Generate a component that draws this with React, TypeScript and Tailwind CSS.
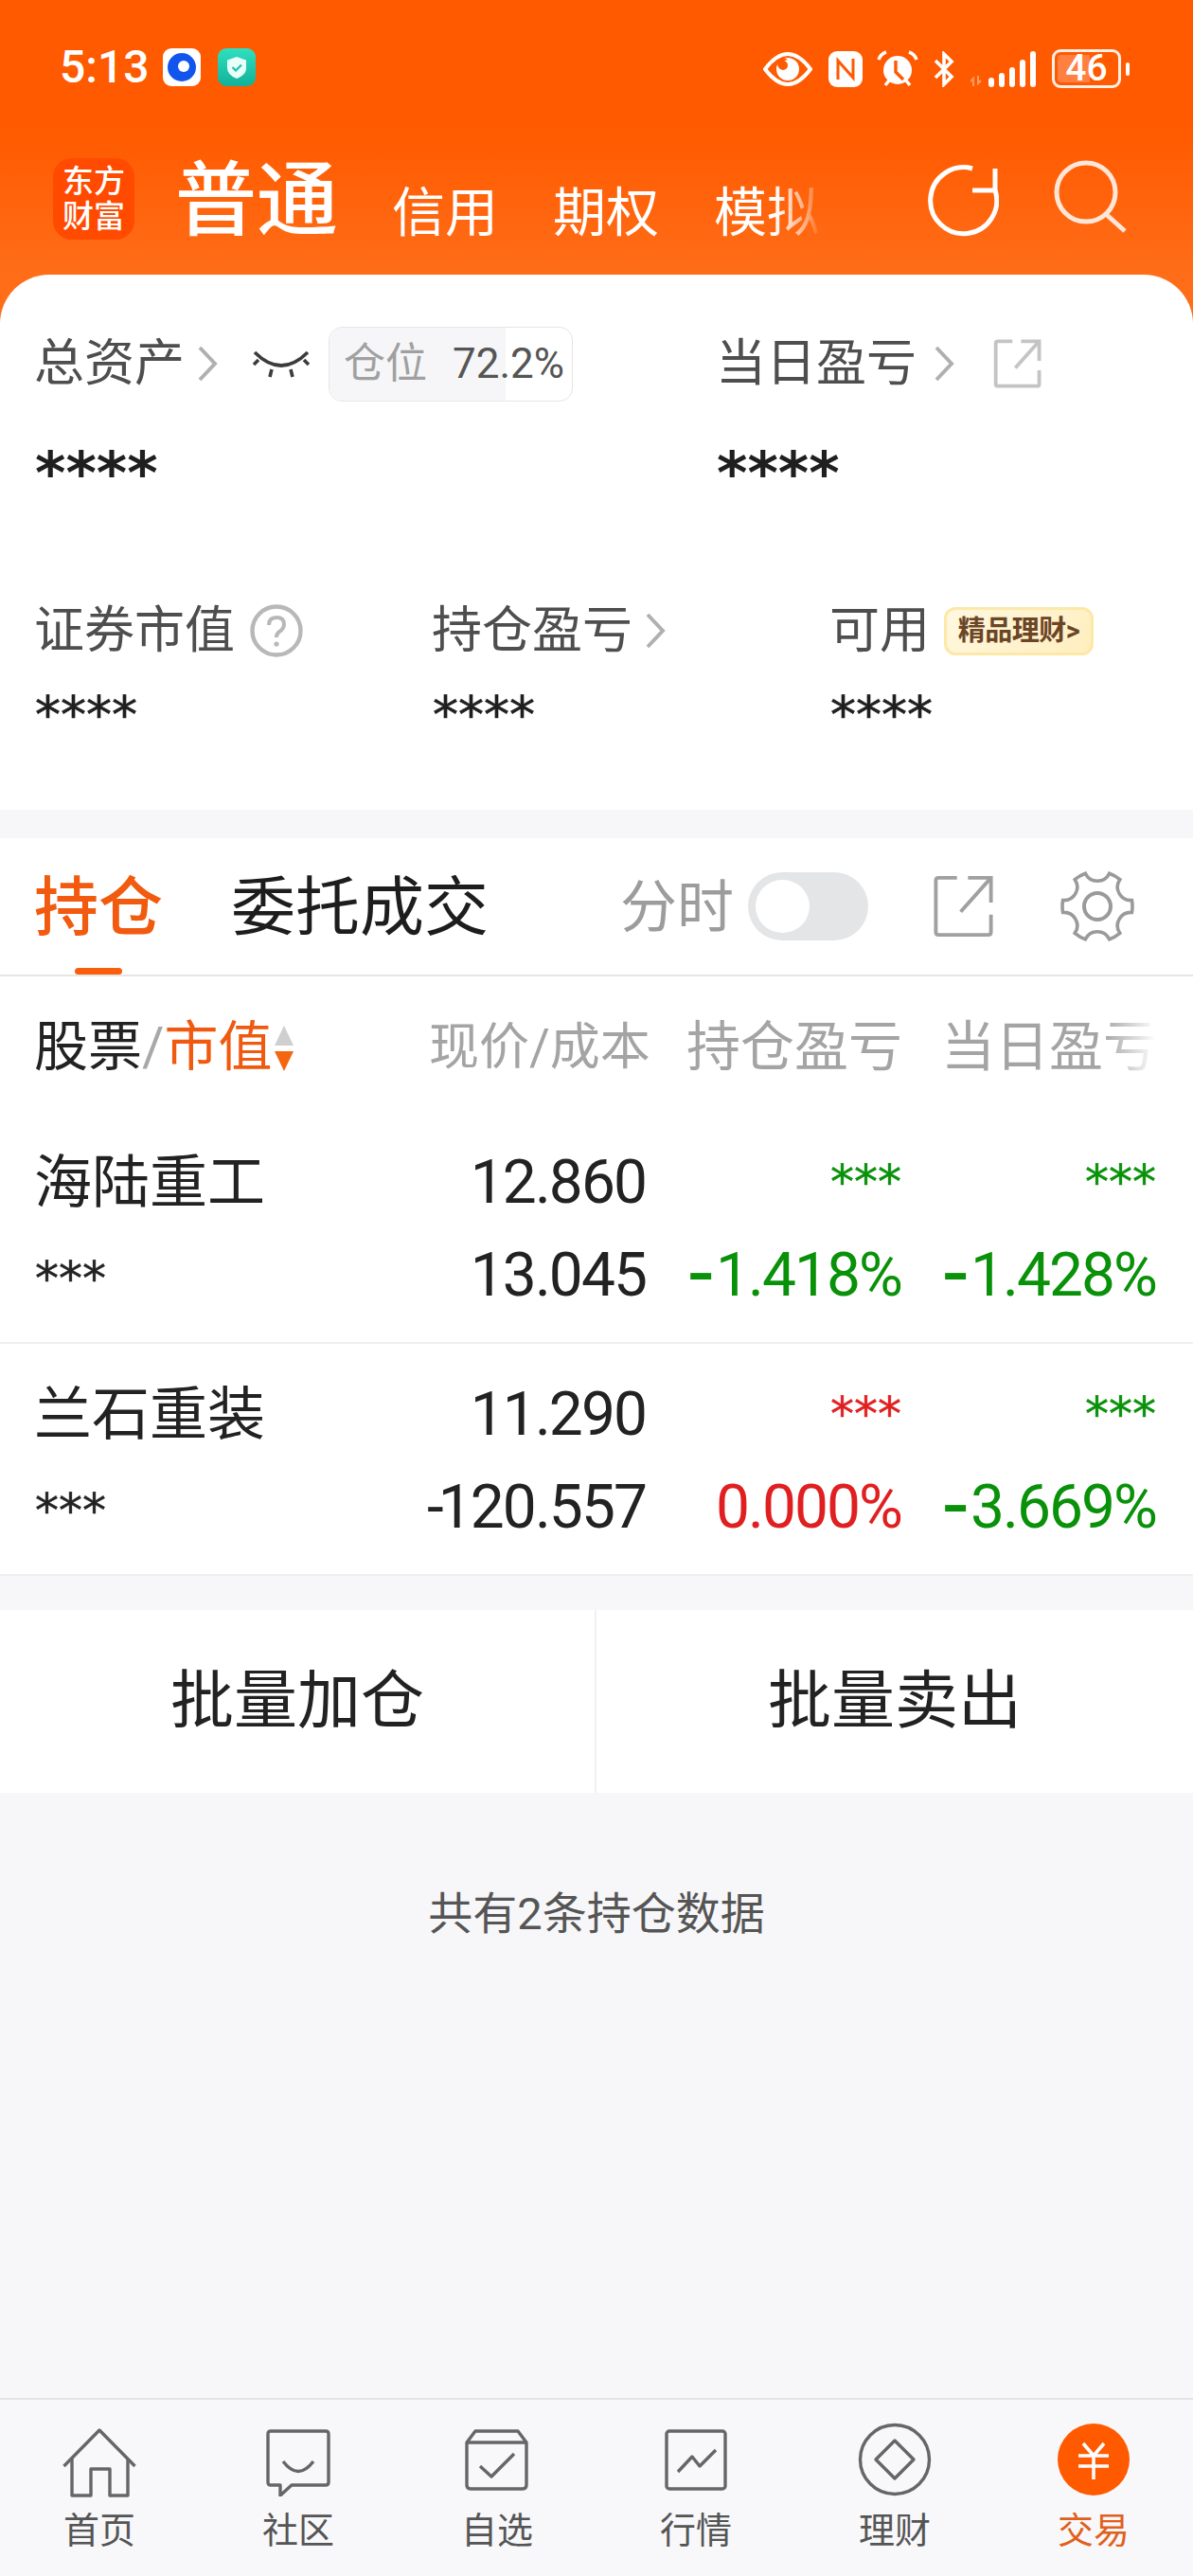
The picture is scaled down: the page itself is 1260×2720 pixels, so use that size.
import React from "react";

const stars = "[font-family:'DejaVu_Sans',sans-serif]";

function Chevron({ className = "" }: { className?: string }) {
  return (
    <svg width="24" height="38" viewBox="0 0 24 38" fill="none" className={className}>
      <path d="M4 2 L20 19 L4 36" stroke="#b0b0b0" strokeWidth="4" />
    </svg>
  );
}

function ShareIcon({ size, color, sw }: { size: number; color: string; sw: number }) {
  return (
    <svg width={size} height={size} viewBox="0 0 65 68" fill="none">
      <path d="M25 3 H5 Q2 3 2 6 V62 Q2 65 5 65 H59 Q62 65 62 62 V43" stroke={color} strokeWidth={sw} />
      <path d="M37 3 H62 V30" stroke={color} strokeWidth={sw} />
      <path d="M62 3 L29 40" stroke={color} strokeWidth={sw} />
    </svg>
  );
}

function gearPath() {
  const c = 39, R = 37;
  const pt = (deg: number) => {
    const t = (deg * Math.PI) / 180;
    return `${(c + R * Math.cos(t)).toFixed(2)} ${(c + R * Math.sin(t)).toFixed(2)}`;
  };
  let d = `M${pt(-110)}`;
  for (let k = 0; k < 6; k++) {
    const a = -90 + 60 * k;
    d += ` A14 14 0 0 0 ${pt(a + 20)}`;
    d += ` A37 37 0 0 1 ${pt(a + 40)}`;
  }
  return d + " Z";
}

function NavIcon({ name }: { name: string }) {
  const s = { fill: "none", stroke: "#666", strokeWidth: 3.4, strokeLinejoin: "round" as const };
  if (name === "首页")
    return (
      <svg width="78" height="74" viewBox="0 0 78 74" {...s} className="mt-[2px]">
        <path d="M1.5 40 L39 2 L76.5 40" />
        <path d="M10 32 V71 H30 V43 H50 V71 H69 V32" />
      </svg>
    );
  if (name === "社区")
    return (
      <svg width="78" height="74" viewBox="-5 -3 78 74" {...s}>
        <path d="M5 2 H63 Q66 2 66 5 V56 Q66 59 63 59 H27 L15 70 V59 H5 Q2 59 2 56 V5 Q2 2 5 2 Z" />
        <path d="M18 34 Q34 55 50 34" />
      </svg>
    );
  if (name === "自选")
    return (
      <svg width="78" height="74" viewBox="-5 -3 78 74" {...s}>
        <path d="M2 14 L11 2 H56 L65 14 V59 Q65 63 61 63 H6 Q2 63 2 59 Z" />
        <path d="M2 14 H65" />
        <path d="M16 39 L28 50 L52 26" />
      </svg>
    );
  if (name === "行情")
    return (
      <svg width="78" height="74" viewBox="-6 -3 78 74" {...s}>
        <rect x="2" y="2" width="62" height="61" rx="3" />
        <path d="M14 45 L29 29 L37 39 L54 22" />
      </svg>
    );
  if (name === "理财")
    return (
      <svg width="78" height="78" viewBox="0 0 78 78" {...s} className="-mt-[4px]">
        <circle cx="39" cy="39" r="36.5" />
        <path d="M39 19 L59 39 L39 59 L19 39 Z" />
      </svg>
    );
  return (
    <svg width="78" height="78" viewBox="0 0 78 78" fill="none" className="-mt-[4px]">
      <circle cx="39" cy="39" r="38" fill="#ff5a00" />
      <path d="M28 22 L39 35 L50 22 M23 35 H55 M23 46 H55 M39 35 V60" stroke="#fff" strokeWidth="3.6" />
    </svg>
  );
}

function StatusIcons() {
  return (
    <div className="flex items-center mr-[67px] mt-[2px]">
      {/* eye */}
      <svg width="52" height="36" viewBox="0 0 52 36" className="mr-[17px]">
        <path d="M2 18 Q14 2 26 2 Q38 2 50 18 Q38 34 26 34 Q14 34 2 18 Z" fill="none" stroke="#fff" strokeWidth="4" />
        <circle cx="26" cy="18" r="12" fill="#fff" />
        <path d="M26 8 A10 10 0 0 0 17 17 A6 6 0 0 1 26 8 Z" fill="#ff5a00" />
        <circle cx="21" cy="14" r="5" fill="#ff5a00" />
      </svg>
      {/* nfc */}
      <svg width="36" height="38" viewBox="0 0 36 38" className="mr-[15px]">
        <rect x="0" y="0" width="36" height="38" rx="9" fill="#fff" />
        <path d="M10 30 V10 L26 28 V8" fill="none" stroke="#ff5a00" strokeWidth="3" />
        <path d="M16 4 H8 Q5 4 5 8 V30 M20 34 H28 Q31 34 31 30 V8" fill="none" stroke="#fff" strokeWidth="1" />
      </svg>
      {/* alarm */}
      <svg width="44" height="40" viewBox="0 0 44 40" className="mr-[16px]">
        <path d="M2 10 Q4 4 10 2 M42 10 Q40 4 34 2 M9 37 L13 32 M35 37 L31 32" stroke="#fff" strokeWidth="3.5" fill="none" />
        <circle cx="22" cy="21" r="15" fill="#fff" />
        <path d="M20 11 V23 L28 31" stroke="#ff5a00" strokeWidth="3.4" fill="none" />
      </svg>
      {/* bluetooth */}
      <svg width="22" height="38" viewBox="0 0 22 38" className="mr-[17px]">
        <path d="M2 10 L19 27 L11 35 V3 L19 11 L2 28" fill="none" stroke="#fff" strokeWidth="3.6" />
      </svg>
      {/* signal */}
      <svg width="72" height="40" viewBox="0 0 72 40" className="mr-[14px]">
        <path d="M3 38 V30 L0 33 M8 27 V35 L11 32" stroke="#ff9c66" strokeWidth="2" fill="none" />
        <rect x="19" y="29" width="6" height="10" rx="3" fill="#fff" />
        <rect x="30" y="24" width="6" height="15" rx="3" fill="#fff" />
        <rect x="41" y="18" width="6" height="21" rx="3" fill="#fff" />
        <rect x="52" y="10" width="6" height="29" rx="3" fill="#fff" />
        <rect x="63" y="1" width="6" height="38" rx="3" fill="#fff" />
      </svg>
      {/* battery */}
      <div className="flex items-center gap-[5px]">
        <div className="relative w-[73px] h-[41px] rounded-[9px] border-[3px] border-white/90 p-[3px] flex">
          <div className="w-[34px] bg-[#ff8040] rounded-l-[4px]" />
          <span className="absolute inset-0 flex items-center justify-center text-white text-[39px] leading-none font-medium">46</span>
        </div>
        <div className="w-[4px] h-[14px] rounded-full bg-white" />
      </div>
    </div>
  );
}

function Header() {
  return (
    <div className="h-[340px] bg-[linear-gradient(180deg,#ff5a00_0%,#ff5a00_40%,#ff6d18_85%,#ff6d18_100%)] text-white shrink-0">
      <div className="h-[142px] flex items-start justify-between pt-[50px]">
        <div className="flex items-center pl-[63px] h-[42px]">
          <span className="text-[48px] leading-none font-medium w-[109px]">5:13</span>
          <div className="w-[40px] h-[40px] rounded-[9px] bg-white flex items-center justify-center">
            <div className="w-[30px] h-[30px] rounded-full bg-[#1155ee] flex items-center justify-center">
              <div className="w-[12px] h-[12px] rounded-full bg-white -mt-[3px] ml-[3px]" />
            </div>
          </div>
          <div className="ml-[18px] w-[40px] h-[40px] rounded-[9px] bg-[linear-gradient(180deg,#2fe0c0,#12b098)] flex items-center justify-center">
            <svg width="22" height="25" viewBox="0 0 22 25">
              <path d="M11 1 L21 4.5 V13 Q21 20 11 24 Q1 20 1 13 V4.5 Z" fill="#e8fffa" />
              <path d="M6.5 12 L10 15.5 L16 9.5" stroke="#20c0a8" strokeWidth="2.2" fill="none" />
            </svg>
          </div>
        </div>
        <StatusIcons />
      </div>
      <div className="flex items-end h-[126px] pb-[8px] relative">
        <div className="ml-[56px] w-[86px] h-[86px] shrink-0 rounded-[20px] bg-[#ff4a00] flex flex-col items-center justify-center mb-[7px]">
          <span className="text-[33px] leading-[37px] font-medium whitespace-nowrap">东方</span>
          <span className="text-[33px] leading-[37px] font-medium whitespace-nowrap">财富</span>
        </div>
        <span className="ml-[43px] shrink-0 text-[86px] leading-[96px] font-medium w-[229px] mb-[-1px]">普通</span>
        <span className="shrink-0 text-[56px] leading-[64px] w-[170px] mb-[3px]">信用</span>
        <span className="shrink-0 text-[56px] leading-[64px] w-[170px] mb-[3px]">期权</span>
        <span className="shrink-0 text-[56px] leading-[64px] w-[225px] mb-[3px] bg-[linear-gradient(90deg,#fff_0,#fff_65px,#ffffff66_100px,#ffffff00_112px)] bg-clip-text text-transparent">模拟</span>
        <svg width="76" height="76" viewBox="0 0 76 76" fill="none" className="mb-[10px] shrink-0">
          <path d="M72 27 A35 35 0 1 1 48 4" stroke="#fff" strokeWidth="5" />
          <path d="M72 4 V27 H48" stroke="#fff" strokeWidth="5" />
        </svg>
        <svg width="78" height="78" viewBox="0 0 78 78" fill="none" className="ml-[58px] mb-[13px] shrink-0">
          <circle cx="34" cy="34" r="31" stroke="#ffe6d8" strokeWidth="5" />
          <path d="M56 58 L75 75" stroke="#ffe6d8" strokeWidth="5" />
        </svg>
      </div>
    </div>
  );
}

function Overview() {
  const label = "text-[53px] leading-[60px] text-[#4e4e4e]";
  const bigStar = `ml-[1px] text-[62px] leading-[100px] font-bold text-[#1f1f1f] ${stars}`;
  return (
    <div className="relative -mt-[50px] h-[565px] bg-white rounded-t-[52px] px-[36px] flex flex-col shrink-0">
      <div className="flex h-[134px] pt-[54px] items-start">
        <div className="w-[720px] flex items-center h-[80px]">
          <span className={label}>总资产</span>
          <Chevron className="ml-[12px]" />
          <svg width="60" height="32" viewBox="0 0 60 32" fill="none" className="ml-[36px]">
            <path d="M2 4 Q30 32 58 4 M6 12 L1 17 M54 12 L59 17 M20 22 L18 30 M40 22 L42 30" stroke="#3c3c3c" strokeWidth="3.6" />
          </svg>
          <div className="relative ml-[20px] w-[258px] h-[79px] rounded-[14px] border border-[#e6e6e6] flex items-center overflow-hidden">
            <div className="w-[186px] h-full bg-[#f6f6f9]" />
            <div className="absolute inset-0 flex items-center pl-[15px] text-[44px] leading-none whitespace-nowrap">
              <span className="text-[#a0a0a0] w-[115px]">仓位</span>
              <span className="text-[#555]">72.2%</span>
            </div>
          </div>
        </div>
        <div className="flex items-center h-[80px]">
          <span className={label}>当日盈亏</span>
          <Chevron className="ml-[17px]" />
          <div className="ml-[40px]"><ShareIcon size={52} color="#c4c4c4" sw={5} /></div>
        </div>
      </div>
      <div className="flex h-[128px] pt-[26px] items-start">
        <span className={`w-[719px] ${bigStar}`}>****</span>
        <span className={bigStar}>****</span>
      </div>
      <div className="mt-[84px] grid grid-cols-[420px_420px_1fr] items-center h-[60px]">
        <div className="flex items-center">
          <span className={label}>证券市值</span>
          <svg width="56" height="56" viewBox="0 0 56 56" fill="none" className="ml-[16px]">
            <circle cx="28" cy="28" r="25.5" stroke="#b8b8b8" strokeWidth="4.4" />
            <path d="M20 22 Q20 14 28 14 Q36 14 36 21 Q36 26 31 29 Q28 31 28 35" stroke="#b8b8b8" strokeWidth="4" />
            <circle cx="28" cy="42" r="2.6" fill="#b8b8b8" />
          </svg>
        </div>
        <div className="flex items-center">
          <span className={label}>持仓盈亏</span>
          <Chevron className="ml-[12px]" />
        </div>
        <div className="flex items-center">
          <span className={label}>可用</span>
          <div className="ml-[15px] w-[158px] h-[51px] rounded-[12px] border-[3px] border-[#fde8a8] bg-[linear-gradient(135deg,#fff8e0,#ffeebe)] flex items-center justify-center text-[29px] tracking-[-0.5px] leading-none font-bold text-[#6b4526] whitespace-nowrap">
            精品理财&gt;
          </div>
        </div>
      </div>
      <div className="mt-[24px] grid grid-cols-[420px_420px_1fr] h-[70px]">
        {[0, 1, 2].map((i) => (
          <span key={i} className={`ml-[1px] text-[54px] leading-[70px] text-[#1f1f1f] [-webkit-text-stroke:0.7px_#1f1f1f] ${stars}`}>****</span>
        ))}
      </div>
    </div>
  );
}

function Tabs() {
  return (
    <div className="mt-[30px] h-[146px] bg-white border-b-[2px] border-[#e6e6e6] flex shrink-0 pl-[36px]">
      <div className="w-[208px] flex flex-col relative">
        <span className="text-[68px] leading-[80px] mt-[34px] text-[#f15a0f] font-medium">持仓</span>
        <div className="absolute left-[43px] bottom-0 w-[50px] h-[7px] rounded-full bg-[#f95e0d]" />
      </div>
      <span className="text-[68px] leading-[80px] mt-[34px] text-[#1d1d1d] w-[411px]">委托成交</span>
      <div className="flex items-center h-[72px] mt-[36px]">
        <span className="text-[60px] leading-none text-[#9c9c9c] w-[135px] pt-[4px]">分时</span>
        <div className="w-[127px] h-[72px] rounded-full bg-[#e4e5e7] p-[8px]">
          <div className="w-[57px] h-[56px] rounded-full bg-white" />
        </div>
        <div className="ml-[68px]"><ShareIcon size={66} color="#a0a0a0" sw={4} /></div>
        <svg width="78" height="78" viewBox="0 0 78 78" fill="none" className="ml-[69px]">
          <path d={gearPath()} stroke="#9a9a9a" strokeWidth="3.6" />
          <circle cx="39" cy="39" r="14" stroke="#9a9a9a" strokeWidth="4" />
        </svg>
      </div>
    </div>
  );
}

function TableHead() {
  return (
    <div className="h-[143px] bg-white flex pl-[36px] pt-[42px] text-[57px] leading-[66px] whitespace-nowrap shrink-0">
      <div className="w-[417px] flex items-start">
        <span className="text-[#222]">股票</span>
        <span className="text-[#a8a8a8]">/</span>
        <span className="text-[#ef5a10]">市值</span>
        <div className="flex flex-col gap-[6px] ml-[2px] mt-[10px]">
          <svg width="20" height="21" viewBox="0 0 20 21"><path d="M10 0 L20 21 H0 Z" fill="#cfcfcf" /></svg>
          <svg width="20" height="21" viewBox="0 0 20 21"><path d="M10 21 L20 0 H0 Z" fill="#f4660f" /></svg>
        </div>
      </div>
      <span className="w-[231px] text-right text-[#a4a4a4] text-[53px]">现价/成本</span>
      <span className="w-[269px] text-right text-[#a4a4a4]">持仓盈亏</span>
      <span className="w-[269px] text-right bg-[linear-gradient(90deg,#a4a4a4_0,#a4a4a4_212px,#a4a4a400_268px)] bg-clip-text text-transparent">当日盈亏</span>
    </div>
  );
}

const G = "text-[#099109]";
const R = "text-[#e02020]";

function Pct({ v }: { v: string }) {
  if (v.startsWith("-")) {
    return (
      <>
        <span className="text-[92px] leading-[0] mr-[5px] relative top-[8px]">-</span>
        {v.slice(1)}
      </>
    );
  }
  return <>{v}</>;
}

function Price({ v }: { v: string }) {
  if (v.startsWith("-")) {
    return (
      <>
        <span className="-mr-[4px]">-</span>
        {v.slice(1)}
      </>
    );
  }
  return <>{v}</>;
}

function Row({ name, p, c, s1, s1c, p1, p1c, s2, p2 }: {
  name: string; p: string; c: string; s1: string; s1c: string; p1: string; p1c: string; s2: string; p2: string;
}) {
  const num = "text-[64px] leading-[80px] tracking-[-0.03em] text-right";
  const star = `text-[50px] leading-[80px] text-right [-webkit-text-stroke:0.5px_currentColor] -mt-[1px] ${stars}`;
  return (
    <div className="h-[245px] bg-white border-b-[2px] border-[#efefef] pl-[36px] pt-[35px] grid grid-cols-[368px_278px_270px_269px] grid-rows-[80px_80px] gap-y-[18px] shrink-0 whitespace-nowrap">
      <span className="text-[61px] leading-[80px] text-[#222]">{name}</span>
      <span className={`${num} text-[#222]`}>{p}</span>
      <span className={`${star} ${s1c}`}>{s1}</span>
      <span className={`${star} ${G}`}>{s2}</span>
      <span className={`ml-[1px] text-[50px] leading-[80px] text-[#222] mt-[3px] [-webkit-text-stroke:0.5px_#222] ${stars}`}>***</span>
      <span className={`${num} text-[#222]`}><Price v={c} /></span>
      <span className={`${num} ${p1c}`}><Pct v={p1} /></span>
      <span className={`${num} ${G}`}><Pct v={p2} /></span>
    </div>
  );
}

const nav = ["首页", "社区", "自选", "行情", "理财", "交易"];

export default function App() {
  return (
    <div className="w-[1260px] h-[2720px] flex flex-col overflow-hidden bg-[#f7f7f9] [font-family:Roboto,'Noto_Sans_CJK_SC',sans-serif]">
      <Header />
      <Overview />
      <Tabs />
      <TableHead />
      <Row name="海陆重工" p="12.860" c="13.045" s1="***" s1c={G} p1="-1.418%" p1c={G} s2="***" p2="-1.428%" />
      <Row name="兰石重装" p="11.290" c="-120.557" s1="***" s1c={R} p1="0.000%" p1c={R} s2="***" p2="-3.669%" />
      <div className="mt-[36px] h-[193px] bg-white grid grid-cols-2 shrink-0">
        <div className="flex items-center justify-center text-[67px] text-[#222] border-r-[2px] border-[#f1f1f1]">批量加仓</div>
        <div className="flex items-center justify-center text-[67px] text-[#222]">批量卖出</div>
      </div>
      <div className="flex-1 flex justify-center pt-[96px]">
        <span className="text-[47px] leading-[64px] text-[#555]">共有2条持仓数据</span>
      </div>
      <div className="h-[188px] border-t-[2px] border-[#e4e4e6] bg-[#f8f8fb] grid grid-cols-6 shrink-0">
        {nav.map((n) => (
          <div key={n} className="flex flex-col items-center pt-[28px]">
            <div className="h-[74px]"><NavIcon name={n} /></div>
            <span className={`mt-[11px] text-[38px] leading-[50px] ${n === "交易" ? "text-[#e0601c]" : "text-[#555]"}`}>{n}</span>
          </div>
        ))}
      </div>
    </div>
  );
}
